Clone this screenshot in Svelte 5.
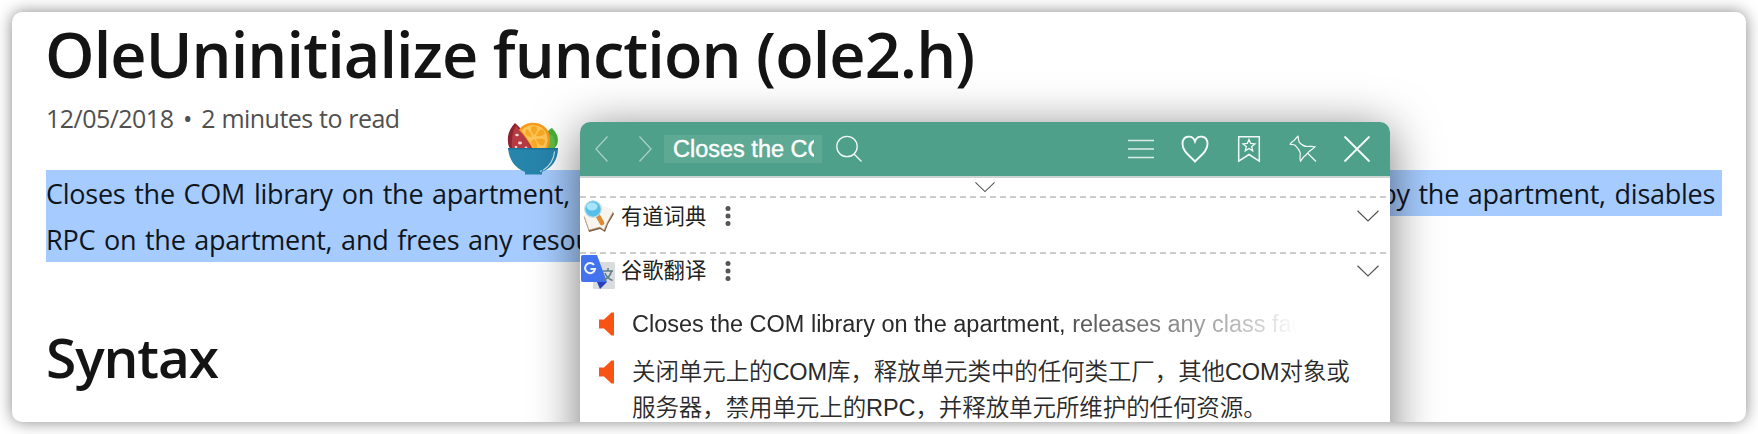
<script>
  const dictionaries = [
    { name: '有道词典', icon: 'book' },
    { name: '谷歌翻译', icon: 'translate' }
  ];
</script>

<div class="page">
  <main class="card">
    <h1>OleUninitialize function (ole2.h)</h1>
    <p class="meta"><span>12/05/2018</span><span>•</span><span>2 minutes to read</span></p>
    <p class="summary">
      <span class="l1">Closes the COM library on the apartment, releases any class factories, other COM objects, or servers held by the apartment, disables&nbsp;</span>
      <span class="l2">RPC on the apartment, and frees any resources the apartment maintains.</span>
    </p>
    <h2>Syntax</h2>

    <svg class="bowl" viewBox="0 0 52 54">
      <path d="M8 1C3 6 0 13 1 20c0 4 2 7 4 8h22C23 18 15 7 8 1z" fill="#8f2330" />
      <path d="M9 4C6 9 4 15 5 28h20C21 18 15 10 9 4z" fill="#b63a43" />
      <path d="M45 6c-6 3-9 9-8 21h10c6-6 5-14-2-21z" fill="#4cae3a" />
      <path d="M44 12c-3 5-4 10-4 15h7c2-6 1-11-3-15z" fill="#62bb46" />
      <path d="M12 8C18-2 37-2 42 11c2 6 1 12-2 17H26C22 20 17 13 12 8z" fill="#f59b1d" />
      <path d="M14.500 9C20 1 35 1 39.500 12c2 5 1 11-2 16H27C23 20 19 14 14.500 9z" fill="#fdc659" />
      <g fill="#f9a826">
        <path d="M27 13.500q-4-5-3-8.500 3-1.500 6 0 1 3.500-3 8.500zM29 14q2-6 6-7 3 2 3 5-4 3-9 2zM29 17q6-1 9 1 0 4-3 6-5-2-6-7zM27 17q4 4 3 9h-3l-3-5q0-3 3-4zM25 15q-5 0-7-4 0-3 2-4 4 3 5 8z" />
      </g>
      <g fill="#f6d5cf"><ellipse cx="10" cy="13" rx="1.800" ry="1.200" /><ellipse cx="13" cy="21" rx="2" ry="1.400" /><circle cx="9" cy="25" r="1.300" /><circle cx="19" cy="26" r="1.400" /></g>
      <path d="M1 26h50c0 12-6 20-16 24v2.500H18V50C8 46 2 38 1 26z" fill="#2785ac" />
      <path d="M1 26h50v1.500H1z" fill="#1d7399" />
      <path d="M47.500 30c-1 9-5 14-11 18" fill="none" stroke="#b9ddea" stroke-width="1.300" stroke-linecap="round" />
      <path d="M35 48.500l-2 1" stroke="#b9ddea" stroke-width="1.200" />
    </svg>

    <section class="popup">
      <header>
        <svg class="nav" viewBox="0 0 14 28"><path d="M12.500 1.500L1 14l11.500 12.500" /></svg>
        <svg class="nav next" viewBox="0 0 14 28"><path d="M1.500 1.500L13 14 1.500 26.500" /></svg>
        <div class="query"><span>Closes the COM library</span></div>
        <svg class="search" viewBox="0 0 28 28"><circle cx="12" cy="11.500" r="10.200" /><path d="M19 19l7.500 7.500" /></svg>
        <div class="tools">
          <svg viewBox="0 0 28 28"><path d="M1 5.500h26M1 22.500h26" opacity=".85" /><path d="M1 14h26" stroke-width="2" opacity=".65" /></svg>
          <svg viewBox="0 0 28 28"><path d="M14 26.500C9 21 1.500 16.500 1.500 9c0-9 10-9.500 12.500-2.500C16.500-.5 26.500 0 26.500 9c0 7.500-7.500 12-12.500 17.500z" stroke-width="1.900" /></svg>
          <svg viewBox="0 0 28 28"><path d="M3.700 1.700h20.600v24.500L14 19.500 3.700 26.200z" stroke-width="1.500" /><path d="M14 4.500l1.700 4 4.300.4-3.300 2.700 1 4.200-3.700-2.300-3.700 2.300 1-4.200L8 8.900l4.300-.4z" /></svg>
          <svg viewBox="0 0 28 28"><path d="M9 1.200c.8 2.800 0 4.600 1.500 6.300 2.500 2.700 4.500 4 8 4 2.500 0 4.500-.5 7.500.3-2 2.200-4.500 3.200-6.300 5-1.600 1.700-2 3.200-4.200 4.400-1.800 1.300-2.700 3.300-4 5-1.500-3 .5-6.200-.5-9-1-2.600-3.300-5.200-5-7-1.600-1.100-3.300-.4-4.800-.9.700-2 2.500-2.500 4-4C6.700 4 7 2.500 9 1.200zM19 18.500l8 8" stroke-width="1.200" /></svg>
          <svg viewBox="0 0 28 28"><path d="M1.500 1.500l25 25M26.500 1.500l-25 25" stroke-width="1.900" /></svg>
        </div>
      </header>
      <div class="fold"><svg class="chev" viewBox="0 0 22 12"><path d="M.5.800L11 11 21.500.8" /></svg></div>
      {#each dictionaries as dict}
        <div class="dict {dict.icon}">
          {#if dict.icon === 'book'}
            <svg class="logo" viewBox="0 0 32 34">
              <path d="M1 17l5 15 11-3 5 3 3-8 6-10-2-3z" fill="#7d5a43" />
              <path d="M1 15l5 15 11-3 4 3 3-7 6-11-4-4-7-2-9 4z" fill="#f8f5ef" />
              <path d="M1 16l5 14 11-3 4 3 3-7 6-11" fill="none" stroke="#c9b39d" stroke-width=".8" />
              <path d="M15 16l4 7" stroke="#dd8b35" stroke-width="4.600" stroke-linecap="round" />
              <circle cx="10" cy="9" r="8.200" fill="#57bfe9" stroke="#b5d9e6" stroke-width="1.200" />
              <ellipse cx="9" cy="6.500" rx="5.500" ry="4" fill="#a8e5fa" />
            </svg>
          {:else}
            <svg class="logo" viewBox="0 0 34 34">
              <rect x="12" y="7" width="22" height="27" rx="1.500" fill="#d9dbdc" />
              <path d="M16 27h10l-7 7z" fill="#2a3fc0" />
              <path d="M2 0h14l10 27H2q-2 0-2-2V2q0-2 2-2z" fill="#4272ee" />
              <path d="M13 10a5 5 0 1 0 1 4H9.500" fill="none" stroke="#eef3ff" stroke-width="2" />
              <path d="M22 16h10M27 13v3M30.500 16c-1 5-5 8-8 9.500M24 18c1 3 4 6 7.500 7.500" fill="none" stroke="#607d85" stroke-width="1.500" />
            </svg>
          {/if}
          <span class="name">{dict.name}</span>
          <svg class="dots" viewBox="0 0 6 22"><circle cx="3" cy="3.500" r="2.500" /><circle cx="3" cy="11" r="2.500" /><circle cx="3" cy="18.500" r="2.500" /></svg>
          <svg class="chev" viewBox="0 0 22 12"><path d="M.5.800L11 11 21.500.8" /></svg>
        </div>
      {/each}
      <div class="line source">
        <svg class="speaker" viewBox="0 0 15 24"><path d="M0 7.500h5L12.500.5H15v23h-2.500L5 16.500H0z" /></svg>
        <p class="fade">Closes the COM library on the apartment, releases any class factories</p>
      </div>
      <div class="line target">
        <svg class="speaker" viewBox="0 0 15 24"><path d="M0 7.500h5L12.500.5H15v23h-2.500L5 16.500H0z" /></svg>
        <p>关闭单元上的COM库，释放单元类中的任何类工厂，其他COM对象或<br />服务器，禁用单元上的RPC，并释放单元所维护的任何资源。</p>
      </div>
    </section>
  </main>
</div>

<style>
  :global(body) { margin: 0; background: #fff; }
  .page { box-sizing: border-box; width: 1758px; height: 434px; padding: 12px; overflow: hidden; }
  .card {
    position: relative; box-sizing: border-box; width: 1734px; height: 410px; padding: 2px 24px 0 34px;
    overflow: hidden; border-radius: 10px; background: #fff; color: #141414;
    box-shadow: 0 0 16px rgba(0, 0, 0, .48); font-family: "Open Sans", sans-serif; white-space: nowrap;
  }
  h1, h2, p { margin: 0; }
  h1 { margin-left: -1px; font-size: 63px; line-height: 80px; font-weight: 600; letter-spacing: -.91px; }
  .meta { display: flex; gap: 9.5px; margin-top: 6px; font-size: 25px; line-height: 36px; color: #505050; letter-spacing: -.53px; word-spacing: .4px; }
  .summary { margin-top: 34px; font-size: 27px; line-height: 48px; color: #10151c; letter-spacing: -.25px; word-spacing: 2px; }
  .summary span { display: block; width: max-content; height: 46px; background: #a6ccff; }
  .summary .l1 { width: 1676px; }
  .summary .l2 { width: 900px; }
  h2 { margin-top: 60px; font-size: 55px; line-height: 70px; font-weight: 600; letter-spacing: -1.1px; }
  .bowl { position: absolute; left: 495px; top: 110px; width: 52px; height: 54px; }
  .popup {
    position: absolute; left: 568px; top: 110px; width: 810px; height: 340px;
    border-radius: 10px 10px 0 0; background: #fff; color: #2a2a2a;
    box-shadow: 0 8px 48px rgba(0, 0, 0, .54); font-family: "Liberation Sans", "Noto Sans CJK SC", sans-serif;
  }
  header {
    display: flex; align-items: center; box-sizing: border-box; height: 56px; padding: 0 19px 0 15px;
    border-bottom: 2px solid #ccd5d2; border-radius: 10px 10px 0 0; background: #4fa08b;
  }
  svg { display: block; flex: none; fill: none; }
  header svg { width: 28px; height: 28px; stroke: #f2faf7; stroke-width: 1.3; }
  header .nav { width: 14px; stroke: #a5d0c3; }
  header .next { margin-left: 29px; }
  .query {
    box-sizing: border-box; width: 158px; height: 28px; margin-left: 12px; padding: 0 8px 0 9px;
    background: #5ea993; color: #fff; font-size: 23.5px; line-height: 29px; -webkit-text-stroke: .4px #fff;
  }
  .query span { display: block; overflow: hidden; }
  .search { margin-left: 13px; }
  .tools { display: flex; gap: 26px; margin-left: auto; }
  .fold { display: flex; justify-content: center; height: 18px; }
  .fold .chev { margin-top: 3px; width: 20px; }
  .chev { width: 22px; height: 12px; stroke: #555; stroke-width: 1.2; }
  .dict {
    display: flex; align-items: center; box-sizing: border-box; height: 56px; padding: 0 11px 16px 1px;
    background: repeating-linear-gradient(90deg, #ccc 0 6px, #fff0 6px 10px) 0 0 / 100% 2px no-repeat;
  }
  .translate { padding-bottom: 18px; }
  .logo { width: 34px; height: 34px; }
  .translate .logo { margin-bottom: -2px; }
  .book .logo { margin: 1px 0 0 2px; width: 32px; }
  .name { margin: -2px 0 0 6px; width: 86px; font-family: "Noto Sans CJK SC", sans-serif; font-size: 21.3px; line-height: 30px; color: #222; }
  .translate .name { margin-top: -4px; }
  .dots { width: 6px; height: 22px; margin-left: 18px; fill: #555; }
  .dict .chev { margin-left: auto; }
  .translate .chev, .translate .dots { margin-top: -1px; }
  .line { display: flex; font-size: 23.5px; line-height: 36px; }
  .source { margin-top: -2px; height: 48px; }
  .target p { letter-spacing: -.09px; font-weight: 350; }
  .speaker { width: 15px; height: 24px; margin: 6px 18px 0 19px; fill: #f75413; }
  .fade { width: 668px; overflow: hidden; mask-image: linear-gradient(90deg, #000 0 430px, #000c 440px, #0009 530px, #0004 620px, transparent 665px); }
</style>
